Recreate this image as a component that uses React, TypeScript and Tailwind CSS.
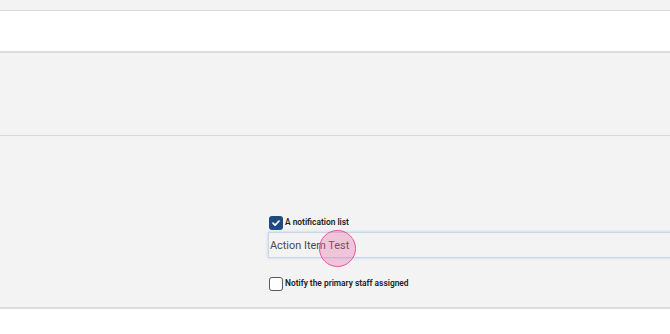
import React, { useState } from "react";

const font = { fontFamily: "Roboto, 'Liberation Sans', sans-serif" };

const CheckBox: React.FC<{ checked: boolean; onToggle: () => void }> = ({
  checked,
  onToggle,
}) => (
  <button
    type="button"
    onClick={onToggle}
    className={
      checked
        ? "flex h-[14px] w-[14px] shrink-0 items-center justify-center rounded-[3px] bg-[#1f4a80]"
        : "h-[14px] w-[14px] shrink-0 rounded-[3px] border-[1.5px] border-[#5a5a5a] bg-white"
    }
  >
    {checked && (
      <svg width="10" height="10" viewBox="0 0 10 10">
        <path
          d="M2 5.2 L4.1 7.2 L8 3"
          fill="none"
          stroke="white"
          strokeWidth="1.7"
          strokeLinecap="round"
          strokeLinejoin="round"
        />
      </svg>
    )}
  </button>
);

export default function App() {
  const [notifyList, setNotifyList] = useState(true);
  const [notifyStaff, setNotifyStaff] = useState(false);
  const [listName, setListName] = useState("Action Item Test");

  return (
    <div className="flex min-h-[334px] flex-col overflow-hidden bg-white" style={font}>
      <div className="h-[10px] bg-[#f3f3f3]" />

      {/* Header bar */}
      <div className="h-[43px] border-t border-b-2 border-t-[#dadada] border-b-[#dcdcdc] bg-white" />

      {/* Empty section */}
      <div className="h-[83px] border-b border-[#d8d8d8] bg-[#f3f3f3]" />

      {/* Notification options */}
      <div className="border-b-2 border-[#dcdcdc] bg-[#f3f3f3] pb-[16px] pl-[269px] pt-[80px]">
        <div className="flex items-start gap-[2px]">
          <CheckBox
            checked={notifyList}
            onToggle={() => setNotifyList(!notifyList)}
          />
          <span className="text-[8.4px] font-semibold leading-[12px] text-[#222]">
            A notification list
          </span>
        </div>

        <div className="relative ml-[-1px] mt-[2px] w-[440px]">
          <input
            value={listName}
            onChange={(e) => setListName(e.target.value)}
            className="h-[26px] w-full border border-[#c8d7e8] bg-[#f3f3f3] px-[1px] pt-[1px] text-[10.9px] text-[#4a4a4a] shadow-[0_0_3px_#bcd3ec] outline-none"
          />
          <div className="pointer-events-none absolute left-[51px] top-[-2px] h-[37px] w-[37px] rounded-full border-[1.5px] border-[#e0569e] bg-[#ec5ba0]/30" />
        </div>

        <div className="mt-[19px] flex items-start gap-[2px]">
          <CheckBox
            checked={notifyStaff}
            onToggle={() => setNotifyStaff(!notifyStaff)}
          />
          <span className="text-[8.4px] font-semibold leading-[12px] text-[#222]">
            Notify the primary staff assigned
          </span>
        </div>
      </div>

      <div className="flex-1 bg-white" />
    </div>
  );
}
